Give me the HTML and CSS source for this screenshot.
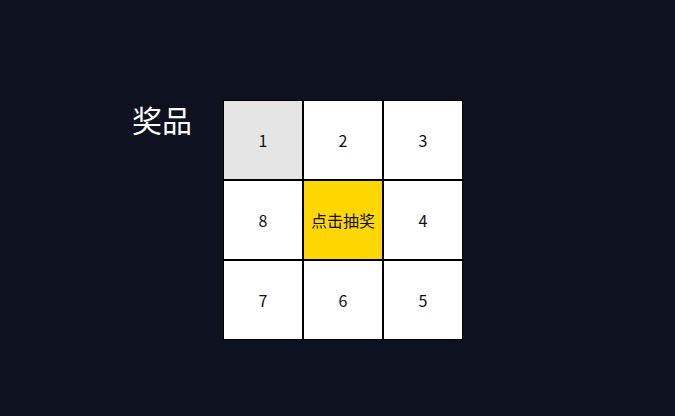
FILE: index.html
```html
<!DOCTYPE html>
<html lang="zh">
<head>
<meta charset="utf-8">
<link rel="stylesheet" href="styles.css">
</head>
<body>
<div class="wrap">
  <h1 class="title">奖品</h1>
  <div class="grid">
    <div class="cell active">1</div>
    <div class="cell">2</div>
    <div class="cell">3</div>
    <div class="cell">8</div>
    <div class="cell start">点击抽奖</div>
    <div class="cell">4</div>
    <div class="cell">7</div>
    <div class="cell">6</div>
    <div class="cell">5</div>
  </div>
</div>
</body>
</html>
```
FILE: styles.css
```css
html, body {
  margin: 0;
  padding: 0;
  background: #0d1120;
  width: 675px;
  height: 416px;
  overflow: hidden;
  font-family: "Noto Sans CJK SC", "Noto Sans", sans-serif;
}
.wrap {
  display: flex;
  align-items: flex-start;
  padding: 100px 0 0 132px;
  gap: 31px;
}
.title {
  margin: 0;
  font-size: 30px;
  font-weight: normal;
  color: #ffffff;
  line-height: 38px;
}
.grid {
  display: grid;
  grid-template-columns: repeat(3, 80px);
  grid-template-rows: repeat(3, 80px);
}
.cell {
  box-sizing: border-box;
  border: 1px solid #000;
  background: #fff;
  color: #111;
  font-size: 16px;
  display: flex;
  align-items: center;
  justify-content: center;
}
.cell.active {
  background: #e5e5e5;
}
.cell.start {
  background: #ffd700;
}
```
